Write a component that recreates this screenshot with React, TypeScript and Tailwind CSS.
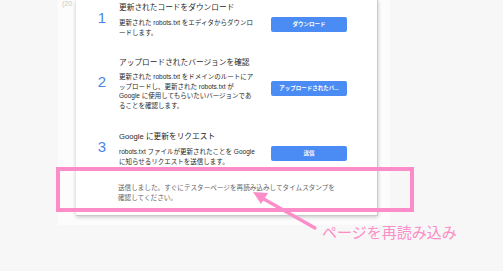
import type { ReactNode } from 'react';

interface Step {
  num: string;
  title: string;
  lines: string[];
  button: string;
  gap: string;
}

const STEPS: ReadonlyArray<Step> = [
  {
    num: '1',
    title: '更新されたコードをダウンロード',
    lines: ['更新された robots.txt をエディタからダウンロ', 'ードします。'],
    button: 'ダウンロード',
    gap: 'mt-[2px]'
  },
  {
    num: '2',
    title: 'アップロードされたバージョンを確認',
    lines: [
      '更新された robots.txt をドメインのルートにア',
      'ップロードし、更新された robots.txt が',
      'Google に使用してもらいたいバージョンであ',
      'ることを確認します。'
    ],
    button: 'アップロードされたバ...',
    gap: 'mt-[19px]'
  },
  {
    num: '3',
    title: 'Google に更新をリクエスト',
    lines: ['robots.txt ファイルが更新されたことを Google', 'に知らせるリクエストを送信します。'],
    button: '送信',
    gap: 'mt-[21px]'
  }
];

const Lines = ({ lines }: { lines: string[] }): ReactNode =>
  lines.map((l, i) => (
    <span key={i} className="block whitespace-nowrap">
      {l}
    </span>
  ));

const StepRow = ({ step }: { step: Step }) => (
  <div className={`flex items-center ${step.gap}`}>
    <div className="mb-[5px] w-[20px] text-center text-[15px] leading-[15px] text-[#4a86e8]">
      {step.num}
    </div>
    <div className="ml-[7px] flex flex-col">
      <div className="whitespace-nowrap text-[7.7px] leading-[11px] text-[#1f1f1f]">{step.title}</div>
      <div className="mt-[4px] flex items-center">
        <div className="w-[152px] text-[6.5px] leading-[9.5px] text-[#2a2a2a]">
          <Lines lines={step.lines} />
        </div>
        <button
          type="button"
          className="mb-[6px] flex h-[15px] w-[76px] items-center justify-center rounded-[2px] bg-[#4a8cf3] px-[3px] text-[5.5px] font-bold whitespace-nowrap text-white"
        >
          {step.button}
        </button>
      </div>
    </div>
  </div>
);

export default function App() {
  return (
    <div className="relative h-[271px] w-[503px] overflow-hidden bg-[#f7f7f7] font-['Liberation_Sans','Noto_Sans_CJK_JP',sans-serif]">
      {/* page behind the dialog */}
      <div className="ml-[58px] h-[225px] w-[332px] bg-[#fcfcfc]">
        <div className="pl-[4px] text-[7px] leading-[8px] text-[#c8c8c8]">(20</div>
      </div>

      {/* dialog */}
      <div className="absolute top-0 left-[76px] flex h-[216px] w-[302px] flex-col border-r border-b border-[#c9c9c9] bg-white pl-[16px] shadow-[0_1px_4px_rgba(0,0,0,0.22)]">
        {STEPS.map((s) => (
          <StepRow key={s.num} step={s} />
        ))}
        <div className="mt-[16px] ml-[26px] text-[6.6px] leading-[9.5px] text-[#666]">
          <Lines
            lines={[
              '送信しました。すぐにテスターページを再読み込みしてタイムスタンプを',
              '確認してください。'
            ]}
          />
        </div>
      </div>

      {/* annotation */}
      <div className="absolute top-[167px] left-[56px] h-[45px] w-[358px] border-[4px] border-[#fd8dc8]" />
      <svg className="absolute top-0 left-0" width="503" height="271" viewBox="0 0 503 271">
        <line x1="315" y1="228" x2="262" y2="198" stroke="#fd8dc8" strokeWidth="3.2" strokeLinecap="round" />
        <polygon points="253,192 268,193 261,204" fill="#fd8dc8" />
      </svg>
      <div className="absolute top-[224px] left-[322px] text-[15px] leading-[18px] whitespace-nowrap text-[#fd8dc8]">
        ページを再読み込み
      </div>
    </div>
  );
}
